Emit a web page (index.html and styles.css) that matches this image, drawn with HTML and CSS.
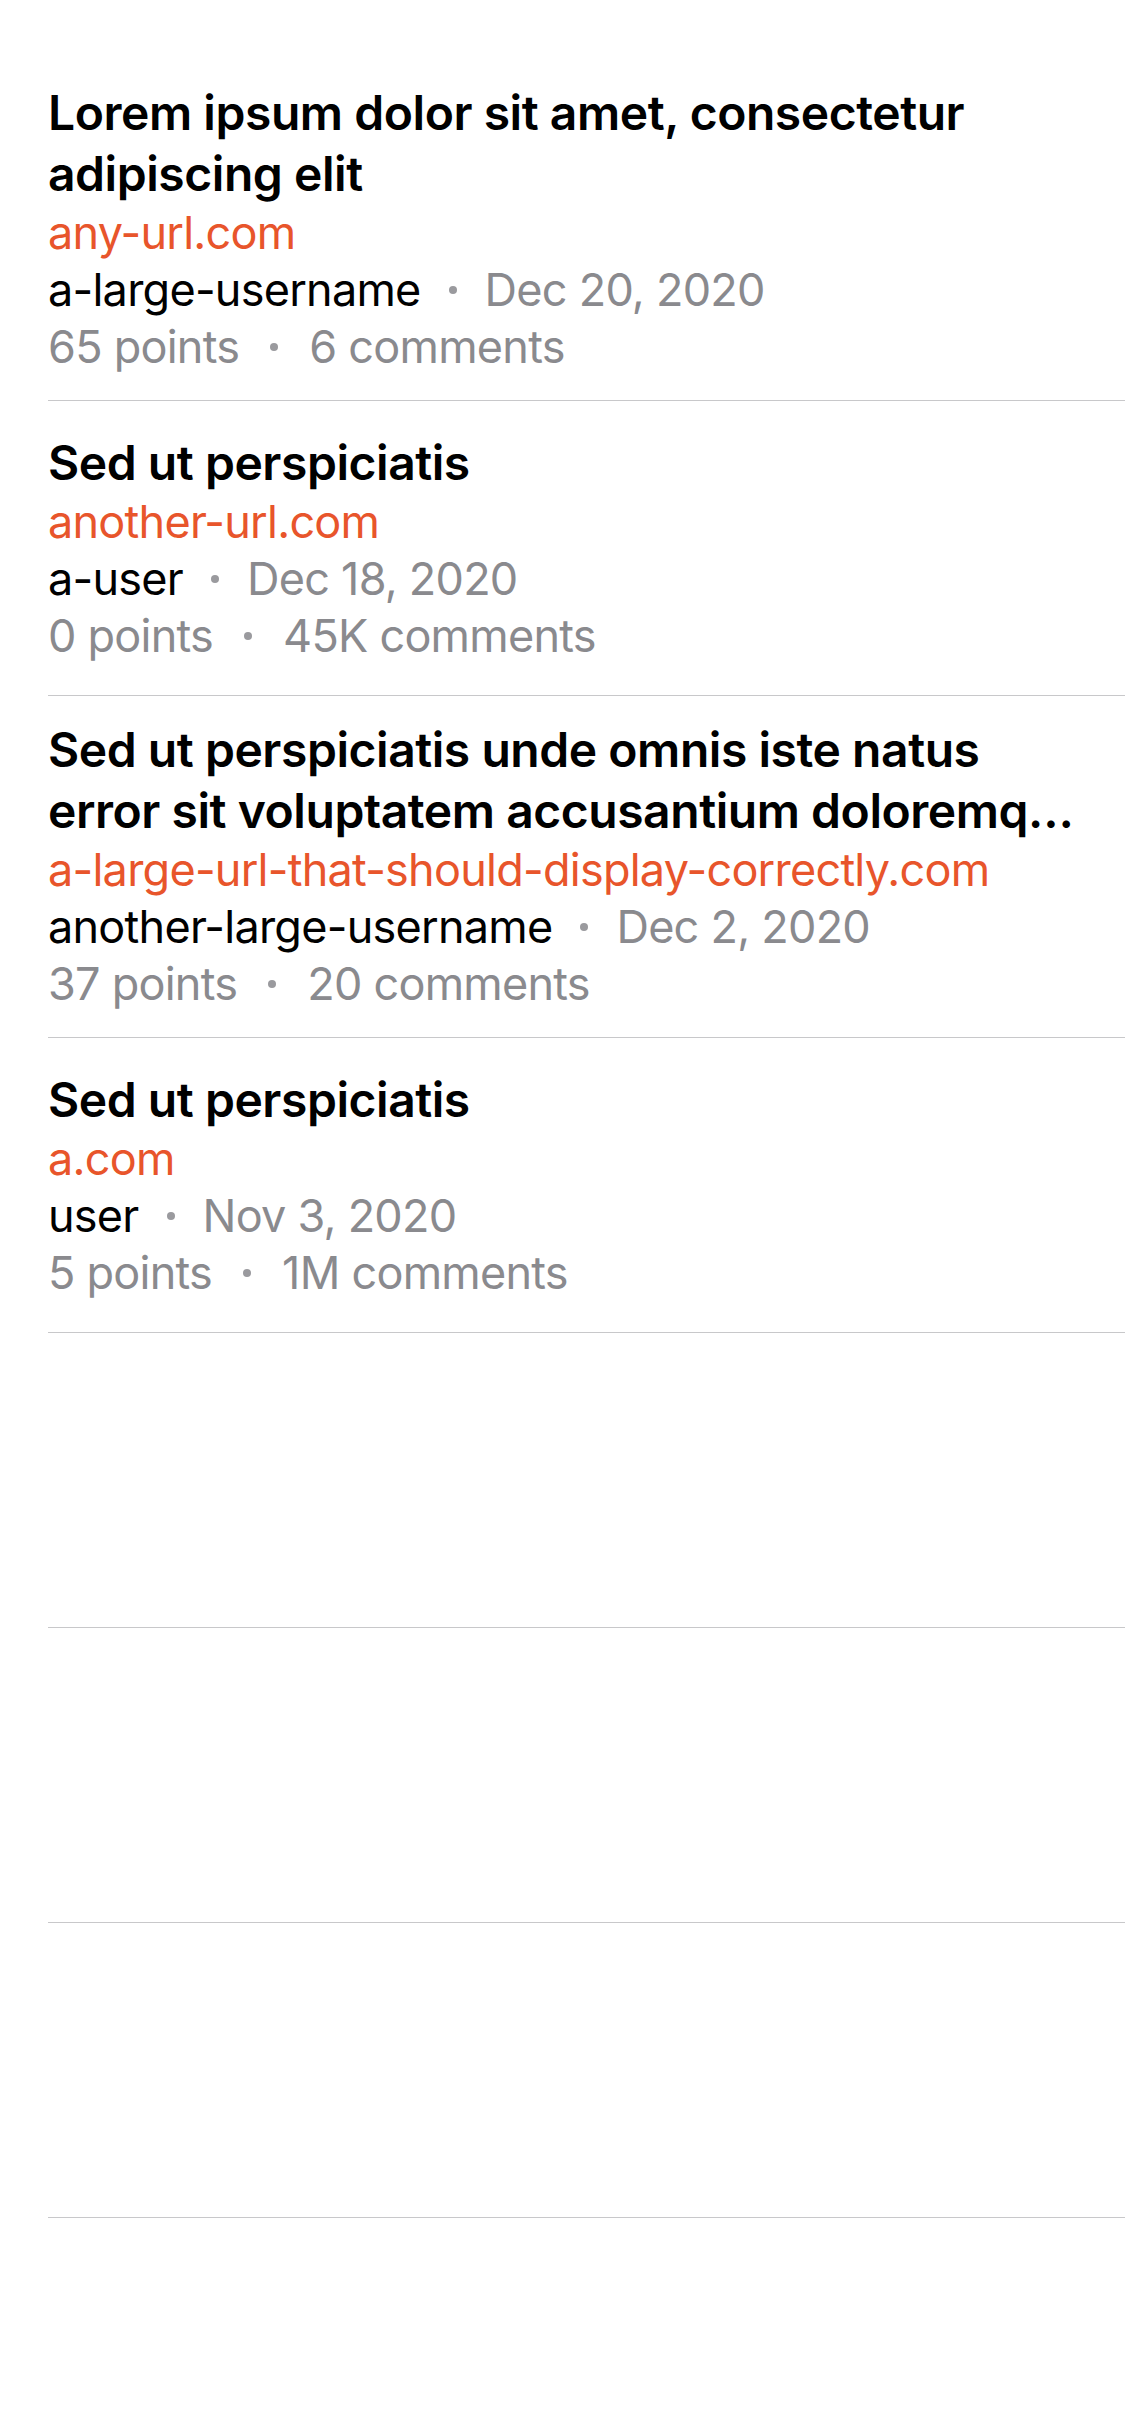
FILE: index.html
```html
<!DOCTYPE html>
<html lang="en">
<head>
<meta charset="utf-8">
<title>Stories</title>
<link rel="stylesheet" href="styles.css">
</head>
<body>
<main class="list">
  <article class="cell cell--wrap">
    <h2 class="title">Lorem ipsum dolor sit amet, consectetur adipiscing elit</h2>
    <div class="url">any-url.com</div>
    <div class="meta"><span class="user">a-large-username</span><span class="dot"></span><span class="muted">Dec 20, 2020</span></div>
    <div class="meta meta--stats muted"><span>65 points</span><span class="dot"></span><span>6 comments</span></div>
  </article>
  <article class="cell">
    <h2 class="title">Sed ut perspiciatis</h2>
    <div class="url">another-url.com</div>
    <div class="meta"><span class="user">a-user</span><span class="dot"></span><span class="muted">Dec 18, 2020</span></div>
    <div class="meta meta--stats muted"><span>0 points</span><span class="dot"></span><span>45K comments</span></div>
  </article>
  <article class="cell cell--wrap">
    <h2 class="title">
      <span class="title-line">Sed ut perspiciatis unde omnis iste natus</span>
      <span class="title-line">error sit voluptatem accusantium doloremque laudantium</span>
    </h2>
    <div class="url">a-large-url-that-should-display-correctly.com</div>
    <div class="meta"><span class="user">another-large-username</span><span class="dot"></span><span class="muted">Dec 2, 2020</span></div>
    <div class="meta meta--stats muted"><span>37 points</span><span class="dot"></span><span>20 comments</span></div>
  </article>
  <article class="cell">
    <h2 class="title">Sed ut perspiciatis</h2>
    <div class="url">a.com</div>
    <div class="meta"><span class="user">user</span><span class="dot"></span><span class="muted">Nov 3, 2020</span></div>
    <div class="meta meta--stats muted"><span>5 points</span><span class="dot"></span><span>1M comments</span></div>
  </article>
  <div class="cell cell--empty"></div>
  <div class="cell cell--empty"></div>
  <div class="cell cell--empty"></div>
</main>
</body>
</html>
```
FILE: styles.css
```css
html, body {
  margin: 0;
  padding: 0;
  background: #ffffff;
}

body {
  font-family: "Inter", "Noto Sans", sans-serif;
  color: #000000;
}

.list {
  padding-top: 59px;
  margin-left: 48px;
}

.cell {
  padding: 31px 40px 31px 0;
  border-bottom: 1px solid #c8c8ca;
}

.cell--wrap {
  padding-top: 23px;
  padding-bottom: 25px;
}

.cell--empty {
  padding: 0;
  height: 294px;
}

.title {
  margin: 0;
  font-size: 48px;
  line-height: 61px;
  font-weight: 600;
  letter-spacing: -0.45px;
}

.title-line {
  display: block;
  white-space: nowrap;
  overflow: hidden;
  text-overflow: ellipsis;
}

.url,
.meta {
  font-size: 45px;
  line-height: 57px;
  font-weight: 400;
  letter-spacing: -0.75px;
  white-space: nowrap;
}

.url {
  color: #e8552b;
}

.meta {
  display: flex;
  align-items: center;
}

.user {
  color: #000000;
}

.muted {
  color: #8a8a8e;
}

.dot {
  flex: none;
  width: 8px;
  height: 8px;
  margin: 0 28px;
  border-radius: 50%;
  background: #9a9a9e;
}

.meta--stats .dot {
  margin: 0 31px;
}
```
